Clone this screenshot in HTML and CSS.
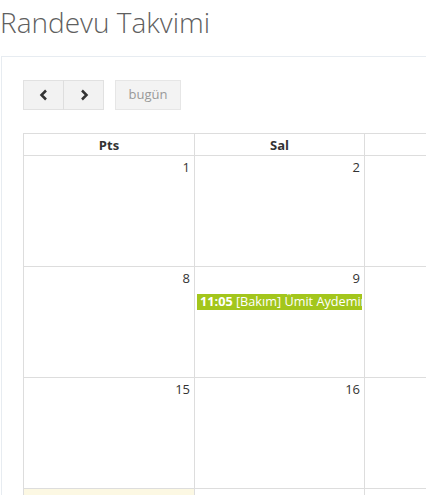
FILE: index.html
```html
<!DOCTYPE html>
<html lang="tr">
<head>
<meta charset="utf-8">
<title>Randevu Takvimi</title>
<link rel="stylesheet" href="styles.css">
</head>
<body>
<h1 class="page-title">Randevu Takvimi</h1>
<div class="portlet">
  <div class="toolbar">
    <div class="btn-group">
      <button class="btn btn-left" aria-label="önceki">
        <svg width="10" height="12" viewBox="0 0 10 12"><path d="M7 1.5 L2.5 6 L7 10.5" fill="none" stroke="#333" stroke-width="2.5" stroke-linejoin="miter"/></svg>
      </button>
      <button class="btn btn-right" aria-label="sonraki">
        <svg width="10" height="12" viewBox="0 0 10 12"><path d="M3 1.5 L7.5 6 L3 10.5" fill="none" stroke="#333" stroke-width="2.5" stroke-linejoin="miter"/></svg>
      </button>
    </div>
    <button class="btn btn-today" disabled>bugün</button>
  </div>
  <table class="cal">
    <colgroup>
      <col class="c1"><col class="c2"><col class="cn"><col class="cn"><col class="cn"><col class="cn"><col class="cn">
    </colgroup>
    <thead>
      <tr><th>Pts</th><th>Sal</th><th>Çar</th><th>Per</th><th>Cum</th><th>Cmt</th><th>Paz</th></tr>
    </thead>
    <tbody>
      <tr>
        <td><div class="num">1</div></td>
        <td><div class="num">2</div></td>
        <td><div class="num">3</div></td>
        <td><div class="num">4</div></td>
        <td><div class="num">5</div></td>
        <td><div class="num">6</div></td>
        <td><div class="num">7</div></td>
      </tr>
      <tr>
        <td><div class="num">8</div></td>
        <td><div class="num">9</div><div class="event"><b>11:05</b> [Bakım] Ümit Aydemir</div></td>
        <td><div class="num">10</div></td>
        <td><div class="num">11</div></td>
        <td><div class="num">12</div></td>
        <td><div class="num">13</div></td>
        <td><div class="num">14</div></td>
      </tr>
      <tr>
        <td><div class="num">15</div></td>
        <td><div class="num">16</div></td>
        <td><div class="num">17</div></td>
        <td><div class="num">18</div></td>
        <td><div class="num">19</div></td>
        <td><div class="num">20</div></td>
        <td><div class="num">21</div></td>
      </tr>
      <tr>
        <td class="today"><div class="num">22</div></td>
        <td><div class="num">23</div></td>
        <td><div class="num">24</div></td>
        <td><div class="num">25</div></td>
        <td><div class="num">26</div></td>
        <td><div class="num">27</div></td>
        <td><div class="num">28</div></td>
      </tr>
    </tbody>
  </table>
</div>
</body>
</html>
```

FILE: styles.css
```css
html, body {
  margin: 0;
  padding: 0;
  background: #fff;
  overflow: hidden;
  height: 495px;
}
body {
  font-family: "Open Sans", "DejaVu Sans", sans-serif;
  color: #333;
}
.page-title {
  margin: 2px 0 14px 0;
  font-size: 28px;
  line-height: 40px;
  font-weight: 300;
  color: #5f5f5f;
}
.portlet {
  margin-left: 1px;
  border-top: 1px solid #e7ecf1;
  border-left: 1px solid #e7ecf1;
  padding: 23px 0 0 21px;
  width: 1300px;
}
.toolbar {
  display: flex;
  align-items: stretch;
  gap: 11px;
  margin-bottom: 23px;
}
.btn-group {
  display: flex;
}
.btn {
  box-sizing: border-box;
  height: 30px;
  margin: 0;
  border: 1px solid #e1e1e1;
  background: #f2f2f2;
  font-family: "Open Sans", "DejaVu Sans", sans-serif;
  font-size: 13px;
  color: #333;
  display: flex;
  align-items: center;
  justify-content: center;
  padding: 0;
}
.btn-left {
  width: 41px;
  border-right: 1px solid #dedede;
}
.btn-right {
  width: 40px;
  border-left: 0;
}
.btn-today {
  width: 66px;
  color: #999;
  background: #f3f3f3;
  border-color: #e6e6e6;
  padding-bottom: 2px;
}
.cal {
  border-collapse: collapse;
  table-layout: fixed;
  width: 1191px;
}
.c1 { width: 171px; }
.c2 { width: 170px; }
.cn { width: 170px; }
.cal th, .cal td {
  border: 1px solid #ddd;
  padding: 0;
}
.cal th {
  height: 21px;
  font-size: 13px;
  font-weight: 700;
  color: #333;
  line-height: 18px;
  text-align: center;
}
.cal td {
  height: 110px;
  vertical-align: top;
}
.cal td.today {
  background: #fcf8e3;
}
.num {
  text-align: right;
  font-size: 13px;
  line-height: 18px;
  padding: 2px 4px 0 0;
  color: #333;
}
.event {
  margin: 7px 2px 0 2px;
  background: #a3c61c;
  color: #fff;
  font-size: 12.7px;
  line-height: 15px;
  padding: 0 0 1px 3px;
  white-space: nowrap;
  overflow: hidden;
}
.event b {
  font-weight: 700;
}
```
